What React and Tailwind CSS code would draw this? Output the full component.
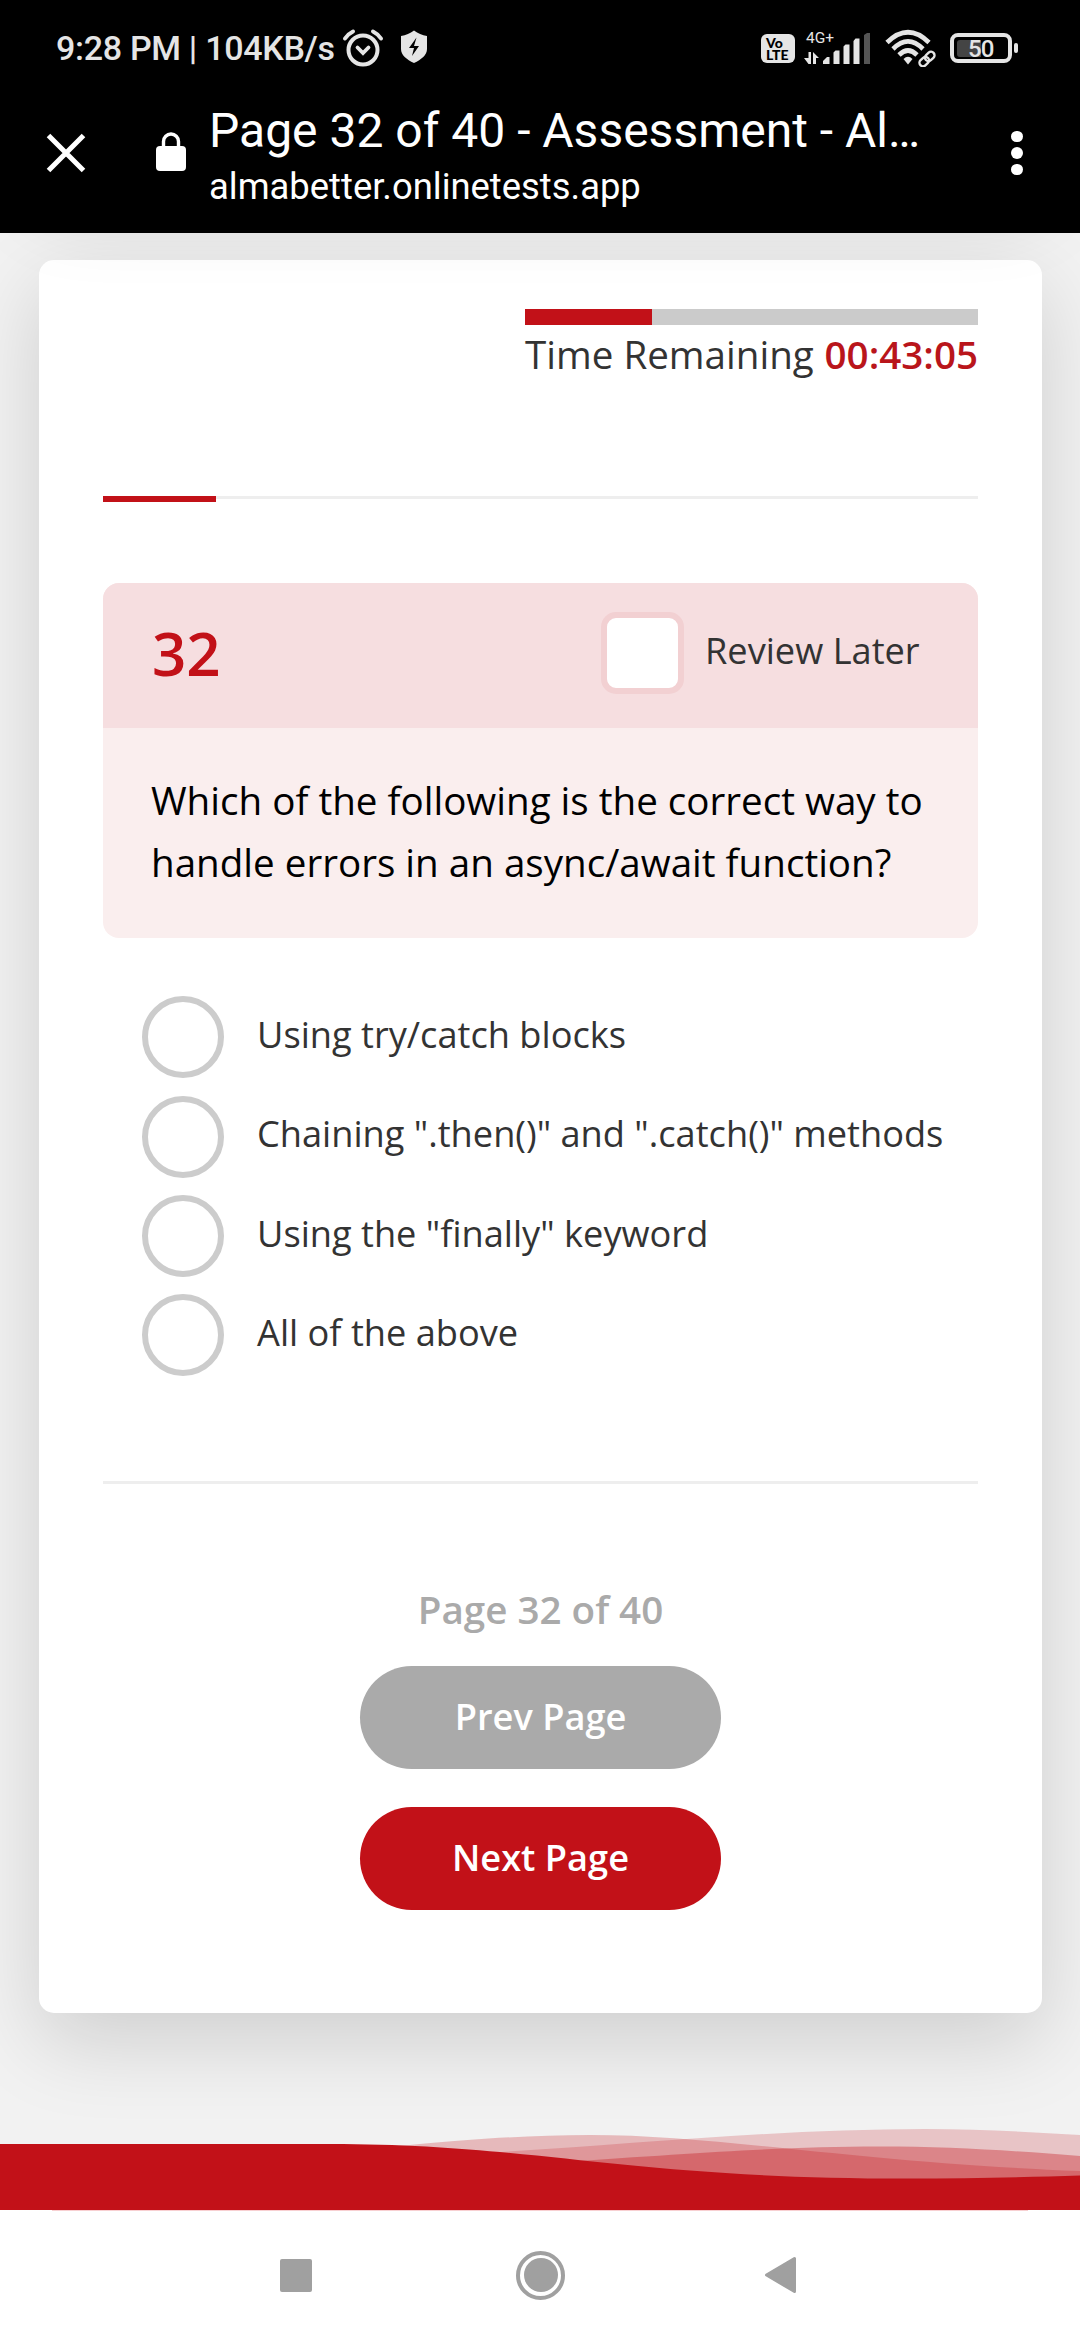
const answers = [
  { text: "Using try/catch blocks", height: "h-[100px]", offset: "mt-[13px]" },
  { text: 'Chaining ".then()" and ".catch()" methods', height: "h-[99px]", offset: "mt-[12px]" },
  { text: 'Using the "finally" keyword', height: "h-[99px]", offset: "mt-[13px]" },
  { text: "All of the above", height: "h-[99px]", offset: "mt-[13px]" },
];

function StatusBar() {
  return (
    <div className="flex h-[95px] items-center pl-[56px] pt-px text-[#e5e5e5]">
      <span className="w-[280px] whitespace-nowrap text-[34px] leading-[40px] font-medium tracking-[-0.3px]">
        9:28 PM | 104KB/s
      </span>
      <svg className="ml-[6px] h-[40px] w-[42px]" viewBox="0 0 42 40" fill="none" stroke="#e5e5e5">
        <circle cx="21" cy="22" r="14.5" strokeWidth="4" />
        <path d="M15.5 19.5 21 25l5.500-5.500" strokeWidth="3.800" strokeLinecap="round" />
        <path d="M3 10.500Q6 6 11 3.500M39 10.500Q36 6 31 3.500" strokeWidth="4" strokeLinecap="round" />
      </svg>
      <svg className="-mt-[2px] ml-[16px] h-[34px] w-[28px]" viewBox="0 0 28 34">
        <path d="M14 .5C18 3.500 22 5 27 6v13c0 6-5.500 10.500-13 14C6.500 29.500 1 25 1 19V6C6 5 10 3.500 14 .5Z" fill="#e5e5e5" />
        <path d="M16.500 7.500 9 18h5l-2 8 7-10h-5Z" fill="#000" />
      </svg>
      <div className="ml-auto mr-[62px] flex items-center">
        <div className="h-[29px] w-[34px] rounded-[6px] bg-[#e5e5e5] pl-[5px] pt-[3px] text-[14px] leading-[12px] font-black whitespace-nowrap text-black [font-family:Lato,sans-serif]">
          Vo
          <br />
          LTE
        </div>
        <svg className="ml-[9px] h-[36px] w-[68px]" viewBox="0 0 68 36" fill="#e5e5e5">
          <text x="2" y="13" fontSize="15.500" fontFamily="Roboto, sans-serif">4G+</text>
          <path d="M4.500 22h2.500v12H4.500L0 28h4.500ZM9 34V22l6 6h-3v6Z" />
          <path d="M19 34v-3l4-4h2.500v7ZM29.500 34V22.500l2-2h4V34ZM39.500 34V16.500l2-2h4V34ZM49.500 34V11l2-2.500h4V34Z" />
          <path d="M60 34V5l3-2h3v31Z" fill="#555" />
        </svg>
        <svg className="ml-[12px] h-[38px] w-[52px]" viewBox="0 0 52 38" fill="none" stroke="#e5e5e5">
          <path d="M3 13.500Q24-7 45 13.500" strokeWidth="4.600" />
          <path d="M9 20Q24 5 39 20" strokeWidth="4.600" />
          <path d="M15 26Q24 17 33 26" strokeWidth="4.600" />
          <path d="M19.500 30Q24 25.500 28.500 30L24 35.500Z" fill="#e5e5e5" stroke="none" />
          <g transform="rotate(-43 43 30)" strokeWidth="2.400">
            <rect x="34" y="26.500" width="10.500" height="7" rx="3.500" />
            <rect x="41.500" y="26.500" width="10.500" height="7" rx="3.500" />
          </g>
        </svg>
        <div className="ml-[14px] flex h-[30px] w-[62px] items-center rounded-[8px] border-4 border-[#e5e5e5] pl-[3px]">
          <div className="flex h-[17px] w-[24px] items-center rounded-l-[3px] bg-[#444]">
            <span className="pl-[11px] pt-[2px] text-[24px] leading-[24px] font-medium tracking-[-1px]">50</span>
          </div>
        </div>
        <div className="ml-[2px] h-[10px] w-[4px] rounded-[2px] bg-[#e5e5e5]" />
      </div>
    </div>
  );
}

function BrowserBar() {
  return (
    <div className="flex h-[138px] text-white">
      <svg className="ml-[46px] mt-[38px] h-[40px] w-[40px]" viewBox="0 0 40 40" stroke="#fff" strokeWidth="5">
        <path d="M2.500 2.500 37.500 37.500M37.500 2.500 2.500 37.500" />
      </svg>
      <svg className="ml-[70px] mt-[37px] h-[40px] w-[30px]" viewBox="0 0 30 40">
        <rect y="14" width="30" height="25" rx="4" fill="#fff" />
        <path d="M7.500 16V9.500a7.500 7.500 0 0 1 15 0V16" fill="none" stroke="#fff" strokeWidth="3.400" />
      </svg>
      <div className="ml-[23px] w-[780px] whitespace-nowrap">
        <div className="mt-[6px] text-[48px] leading-[60px]">Page 32 of 40 - Assessment - Al…</div>
        <div className="mt-[3px] text-[36.400px] leading-[46px]">almabetter.onlinetests.app</div>
      </div>
      <div className="ml-[22px] mt-[35.500px] flex flex-col gap-[5px]">
        <i className="size-[11.500px] rounded-full bg-white" />
        <i className="size-[11.500px] rounded-full bg-white" />
        <i className="size-[11.500px] rounded-full bg-white" />
      </div>
    </div>
  );
}

function Waves() {
  return (
    <svg className="block h-[90px] w-full" viewBox="0 0 1080 90" fill="#c21118">
      <path opacity=".25" d="M380 28C410 25 500 15 590 15C720 15 850 42 1080 51V90H380Z" />
      <path opacity=".2" d="M460 34C600 28 760 9 925 9C980 9 1030 12 1080 15V90H460Z" />
      <path opacity=".35" d="M560 42C700 33 780 26.500 880 26.500C950 26.500 1020 31 1080 36V90H560Z" />
      <path d="M0 24H330C540 24 620 58.500 908 58.500C970 58.500 1030 57 1080 55.500V90H0Z" />
    </svg>
  );
}

function NavigationBar() {
  return (
    <div className="h-[130px] bg-white">
      <div className="mx-[52px] h-px bg-[#f8d0d2]" />
      <div className="flex h-[129px] items-center pb-px">
        <div className="ml-[280px] h-[33px] w-[32px] rounded-[2px] bg-[#a0a0a0]" />
        <div className="ml-[204px] flex size-[49px] items-center justify-center rounded-full border-4 border-[#a0a0a0]">
          <div className="size-[34px] rounded-full bg-[#a0a0a0]" />
        </div>
        <svg className="ml-[199px] h-[38px] w-[34px]" viewBox="0 0 34 38">
          <path d="M2.500 19 30.500 2.500v33Z" fill="#a0a0a0" stroke="#a0a0a0" strokeWidth="3" strokeLinejoin="round" />
        </svg>
      </div>
    </div>
  );
}

export default function App() {
  return (
    <div className="h-[2340px] w-[1080px] overflow-hidden bg-[#f2f2f2] [font-family:'Open_Sans',sans-serif]">
      <header className="relative z-10 h-[233px] bg-black [font-family:Roboto,sans-serif]">
        <StatusBar />
        <BrowserBar />
      </header>

      {/* Previous card, scrolled under the header; only its shadow reaches below. */}
      <div className="relative z-[5] mx-[39px] -mt-[160px] mb-[55px] h-[105px] w-[1003px] rounded-[15px] shadow-[0_27.5px_82.5px_rgba(0,0,0,0.15)]" />

      <div className="h-[1887px] px-[39px] pt-[27px]">
        <main className="h-[1753px] w-[1003px] rounded-[15px] bg-white px-[64px] pt-[49px] text-[#333] shadow-[0_27.5px_82.5px_rgba(0,0,0,0.15)]">
          <div className="ml-auto h-[187px] w-[453px]">
            <div className="h-[16px] bg-[#cbcbcb]">
              <div className="h-full w-[127px] bg-[#c21118]" />
            </div>
            <div className="mt-[2px] flex justify-between whitespace-nowrap text-[38.600px] leading-[54px]">
              <span>Time Remaining</span>
              <span className="font-semibold text-[#b9151b]">00:43:05</span>
            </div>
          </div>

          <div className="h-[87px]">
            <div className="h-[3px] bg-[#eee]">
              <div className="h-[6px] w-[113px] bg-[#c21118]" />
            </div>
          </div>

          <section className="h-[355px] overflow-hidden rounded-[16px] bg-[#faeeee]">
            <div className="flex h-[145px] bg-[#f6dee0] pl-[49px]">
              <span className="mt-[29px] w-[449px] text-[60px] leading-[82px] font-semibold text-[#c21118]">32</span>
              <div className="mt-[29px] h-[82px] w-[83px] rounded-[15px] border-[6px] border-[#f2d0d2] bg-white" />
              <span className="ml-[21px] mt-[42px] text-[36.200px] leading-[50px]">Review Later</span>
            </div>
            <p className="pl-[48px] pt-[41px] text-[38.600px] leading-[62px] whitespace-nowrap text-black">
              Which of the following is the correct way to
              <br />
              handle errors in an async/await function?
            </p>
          </section>

          <div className="flex h-[543px] flex-col pl-[39px] pt-[58px]">
            {answers.map((answer) => (
              <label key={answer.text} className={"flex items-start " + answer.height}>
                <div className="size-[82px] shrink-0 rounded-full border-[6px] border-[#ccc]" />
                <span className={"ml-[33px] text-[36.200px] leading-[50px] whitespace-nowrap " + answer.offset}>
                  {answer.text}
                </span>
              </label>
            ))}
          </div>

          <div className="h-[3px] bg-[#eee]" />

          <div className="flex flex-col items-center pt-[98px]">
            <div className="text-[38.600px] leading-[54px] font-semibold text-[#aaa]">Page 32 of 40</div>
            <button className="mt-[30px] h-[103px] w-[361px] rounded-full bg-[#aaa] pb-[2px] text-[36.200px] font-semibold text-white">
              Prev Page
            </button>
            <button className="mt-[38px] h-[103px] w-[361px] rounded-full bg-[#c21118] pb-[2px] text-[36.200px] font-semibold text-white">
              Next Page
            </button>
          </div>
        </main>
      </div>

      <Waves />
      <NavigationBar />
    </div>
  );
}
